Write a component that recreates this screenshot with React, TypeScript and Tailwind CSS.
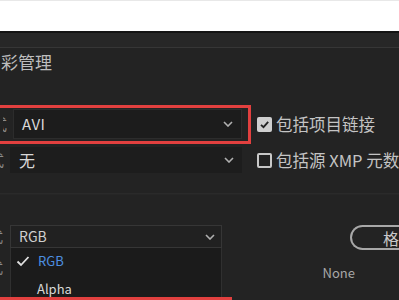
import React from "react";

const font = { fontFamily: '"Noto Sans CJK SC", "Noto Sans", sans-serif' };

function Chevron({ className = "" }: { className?: string }) {
  return (
    <svg width="10" height="6" viewBox="0 0 10 6" className={className}>
      <path d="M1 1 L5 5 L9 1" stroke="#b0b0b0" strokeWidth="1.6" fill="none" />
    </svg>
  );
}

function CutLabel({ ch }: { ch: string }) {
  return (
    <div className="w-[10px] shrink-0 h-[26px] flex items-center justify-start overflow-hidden">
      <span className="text-[15px] text-[#8a8a8a] -ml-[11px] shrink-0">{ch}</span>
    </div>
  );
}

export default function App() {
  return (
    <div className="w-[399px] h-[300px] overflow-hidden bg-[#232323] flex flex-col" style={font}>
      <div className="h-[31px] bg-white border-t border-[#e8e8e8] shrink-0" />
      <div className="h-[2px] bg-[#141414] shrink-0" />
      <div className="h-[15px] bg-[#272727] border-b border-[#363636] shrink-0" />
      {/* title */}
      <div className="h-[56px] shrink-0 pt-[3px] pl-[1px] text-[17px] leading-[22px] text-[#bdbdbd]">彩管理</div>
      {/* row 1 */}
      <div className="flex items-center h-[40px] shrink-0">
        <div className="-ml-[4px] w-[255px] shrink-0 h-[39px] border-[3px] border-[#e2403f] flex items-center pl-[4px] pr-[6px]">
          <CutLabel ch="式" />
          <div className="flex-1 h-[30px] bg-[#1c1c1c] border border-[#2c2c2c] flex items-center justify-between pl-[8px] pr-[8px]">
            <span className="text-[15px] text-[#d8d8d8] tracking-[0.5px]">AVI</span>
            <Chevron />
          </div>
        </div>
        <div className="ml-[6px] flex items-center gap-[4px] shrink-0">
          <div className="w-[15px] h-[15px] rounded-[2px] bg-[#cfcfcf] flex items-center justify-center">
            <svg width="11" height="11" viewBox="0 0 11 11">
              <path d="M2 5.8 L4.5 8.2 L9.2 2.8" stroke="#222" strokeWidth="1.8" fill="none" />
            </svg>
          </div>
          <span className="text-[16.5px] leading-[20px] text-[#c4c4c4] whitespace-nowrap">包括项目链接</span>
        </div>
      </div>
      {/* row 2 */}
      <div className="flex items-center h-[32px] shrink-0">
        <CutLabel ch="式" />
        <div className="w-[232px] shrink-0 h-[26px] bg-[#1d1d1d] flex items-center justify-between pl-[9px] pr-[8px]">
          <span className="text-[16px] text-[#d8d8d8]">无</span>
          <Chevron />
        </div>
        <div className="ml-[15px] flex items-center gap-[4px] whitespace-nowrap shrink-0">
          <div className="w-[15px] h-[15px] rounded-[2px] border-[2px] border-[#c8c8c8]" />
          <span className="text-[16.5px] leading-[20px] text-[#c4c4c4]">包括源 XMP 元数据</span>
        </div>
      </div>
      {/* separators */}
      <div className="h-[18px] shrink-0 border-b border-[#2a2a2a]" />
      <div className="h-[31px] shrink-0 border-t border-[#262626]" />
      {/* lower area */}
      <div className="flex flex-1 min-h-0">
        <div className="w-[10px] shrink-0 flex flex-col items-start overflow-hidden">
          <span className="h-[23px] flex items-center text-[14px] text-[#8a8a8a] -ml-[11px]">式</span>
          <span className="mt-[8px] h-[22px] flex items-center text-[14px] text-[#8a8a8a] -ml-[11px]">式</span>
        </div>
        <div className="w-[212px] shrink-0 flex flex-col">
          <div className="h-[23px] shrink-0 border border-[#363636] bg-[#212121] flex items-center justify-between pl-[8px] pr-[6px]">
            <span className="text-[14px] text-[#d0d0d0]">RGB</span>
            <Chevron />
          </div>
          <div className="flex-1 bg-[#1b1b1b] border-x border-[#303030] flex flex-col pt-[2px]">
            <div className="flex items-center h-[22px]">
              <svg width="14" height="12" viewBox="0 0 14 12" className="ml-[5px]">
                <path d="M1.5 6.5 L5 10 L12.5 2" stroke="#e0e0e0" strokeWidth="1.8" fill="none" />
              </svg>
              <span className="ml-[8px] text-[13px] text-[#4d8fe0]">RGB</span>
            </div>
            <div className="flex items-center h-[29px] pt-[4px] pl-[26px]">
              <span className="text-[13px] text-[#d8d8d8]">Alpha</span>
            </div>
          </div>
        </div>
        <div className="flex-1 flex flex-col items-end">
          <div className="w-[50px] h-[25px] -mr-[1px] rounded-l-full border-[2px] border-r-0 border-[#a8a8a8] flex items-center justify-end pr-[1px]">
            <span className="text-[16px] text-[#c8c8c8]">格</span>
          </div>
          <div className="w-full flex justify-end pr-[44px] mt-[13px]">
            <span className="text-[13px] text-[#a8a8a8]">None</span>
          </div>
        </div>
      </div>
      <div className="h-[3px] w-[232px] bg-[#e2403f] shrink-0" />
    </div>
  );
}
